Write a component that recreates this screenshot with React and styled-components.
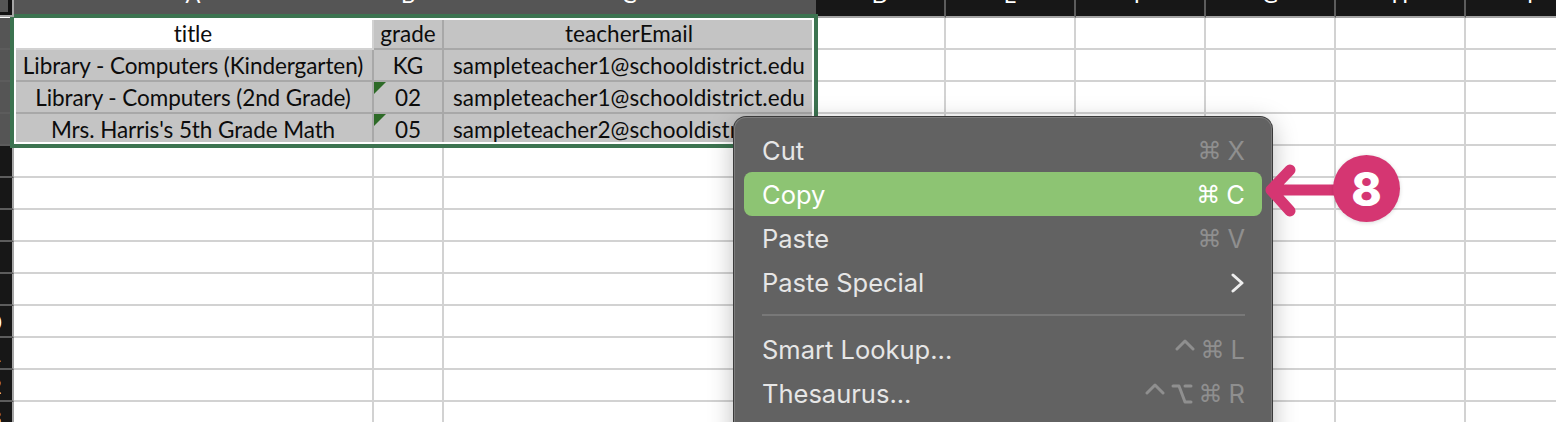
import React from 'react';
import styled, { createGlobalStyle } from 'styled-components';

const GlobalStyle = createGlobalStyle`
  html, body {
    margin: 0;
    width: 1556px;
    height: 422px;
    overflow: hidden;
    background: #fff;
  }
`

const Sheet = styled.div`
  position: relative;
  width: 1556px;
  height: 422px;
  overflow: hidden;
  font-family: Lato, "Open Sans", sans-serif;
  color: #0c0c0c;
`

const HeaderRow = styled.div`
  display: flex;
  height: 18px;
`
const Corner = styled.div`
  position: relative;
  z-index: 1;
  flex: none;
  box-sizing: border-box;
  width: 14px;
  height: 17px;
  border-right: 2px solid #a5a5a5;
  border-bottom: 2px solid #a5a5a5;
`
const CornerMark = styled.div`
  box-sizing: border-box;
  height: 15px;
  background: #555;
  border-right: 4px solid #111;
  border-bottom: 3px solid #111;
`
const ColHeader = styled.div`
  flex: none;
  box-sizing: border-box;
  width: ${p => p.$w}px;
  display: flex;
  justify-content: center;
  align-items: flex-end;
  overflow: hidden;
  background: ${p => (p.$selected ? '#555' : '#171717')};
  color: #fff;
  font-size: 22px;
  line-height: 22px;
  border-bottom: 2px solid #a5a5a5;
  border-right: 2px solid ${p => (p.$selected ? '#555' : '#5c5c5c')};
  span {
    margin-bottom: 10px;
  }
`

const Row = styled.div`
  display: flex;
  height: 32px;
`
const RowHeader = styled.div`
  flex: none;
  box-sizing: border-box;
  width: 14px;
  display: flex;
  justify-content: flex-end;
  align-items: center;
  overflow: hidden;
  white-space: nowrap;
  background: ${p => (p.$selected ? '#555' : '#171717')};
  color: #fff;
  font-size: 22px;
  border-bottom: 2px solid #5c5c5c;
  border-right: 2px solid #a5a5a5;
  span {
    flex: none;
    width: 26px;
    margin-right: 10px;
    text-align: center;
  }
`
const Cell = styled.div`
  position: relative;
  flex: none;
  box-sizing: border-box;
  width: ${p => p.$w}px;
  display: flex;
  justify-content: center;
  align-items: center;
  padding-top: 1px;
  white-space: nowrap;
  overflow: hidden;
  font-size: 22.5px;
  letter-spacing: ${p => p.$track || 0}px;
  background: ${p => (p.$selected ? '#c4c4c4' : '#fff')};
  border-bottom: 2px solid ${p => (p.$selected ? '#a8a8a8' : '#d2d2d2')};
  border-right: 2px solid ${p => (p.$selected ? '#a8a8a8' : '#d2d2d2')};
  ${p => p.$flag && `
    &::before {
      content: '';
      position: absolute;
      left: 0;
      top: 0;
      border-top: 12px solid #2d6a27;
      border-right: 12px solid transparent;
    }
  `}
`

const Selection = styled.div`
  position: absolute;
  left: 10px;
  top: 14px;
  width: 808px;
  height: 134px;
  box-sizing: border-box;
  border: 4px solid #3c7350;
  box-shadow: inset 0 0 0 2px #fff;
`

const Menu = styled.div`
  position: absolute;
  left: 734px;
  top: 117px;
  width: 538px;
  height: 340px;
  box-sizing: border-box;
  padding-top: 11px;
  background: #626262;
  border-radius: 12px;
  font-family: Inter, Roboto, sans-serif;
  font-size: 25.5px;
  box-shadow: inset 0 0 0 1px #7c7c7c, 0 0 0 1px #3a3a3a, 0 6px 26px rgba(0, 0, 0, 0.28);
`
const Item = styled.div`
  box-sizing: border-box;
  display: flex;
  align-items: center;
  justify-content: space-between;
  height: 44px;
  margin: 0 10px;
  padding: 1px 17px 0 18px;
  border-radius: 8px;
  color: ${p => (p.$active ? '#fff' : '#e6e6e6')};
  background: ${p => (p.$active ? '#8dc473' : 'transparent')};
`
const Shortcut = styled.span`
  display: flex;
  align-items: center;
  gap: 6px;
  color: ${p => (p.$active ? '#fff' : '#8f8f8f')};
`
const KeyGlyph = styled.span`
  font-family: "DejaVu Sans", sans-serif;
  font-size: 24px;
`
const KeyIcon = styled.svg`
  flex: none;
  margin-bottom: ${p => p.$lift || 0}px;
  fill: none;
  stroke: currentColor;
  stroke-width: 3;
  stroke-linecap: round;
  stroke-linejoin: round;
`
const Separator = styled.div`
  height: 2px;
  margin: 10px 27px 11px 28px;
  background: #787878;
`

const Badge = styled.div`
  position: absolute;
  left: 1333px;
  top: 155px;
  width: 67px;
  height: 67px;
  border-radius: 50%;
  display: flex;
  align-items: center;
  justify-content: center;
  background: #d53672;
  color: #fff;
  font-family: Inter, sans-serif;
  font-weight: 800;
  font-size: 46px;
  box-shadow: 0 1px 4px rgba(0, 0, 0, 0.15);
`
const ArrowIcon = styled.svg`
  position: absolute;
  left: 1260px;
  top: 160px;
`

const columns = [
  { w: 360, label: 'A', selected: true, track: -0.08 },
  { w: 70, label: 'B', selected: true },
  { w: 372, label: 'C', selected: true, track: 0.06 },
  { w: 130, label: 'D' },
  { w: 130, label: 'E' },
  { w: 130, label: 'F' },
  { w: 130, label: 'G' },
  { w: 130, label: 'H' },
  { w: 130, label: 'I' },
]

const data = [
  ['title', 'grade', 'teacherEmail'],
  ['Library - Computers (Kindergarten)', 'KG', 'sampleteacher1@schooldistrict.edu'],
  ['Library - Computers (2nd Grade)', '02', 'sampleteacher1@schooldistrict.edu'],
  ["Mrs. Harris's 5th Grade Math", '05', 'sampleteacher2@schooldistrict.edu'],
]

const rows = []
for (let i = 0; i < 13; i++) rows.push(i)

const ControlKey = () => (
  <KeyIcon $lift={10} width="20" height="14" viewBox="0 0 20 14"><path d="M2 11L10 3l8 8" /></KeyIcon>
)
const OptionKey = () => (
  <KeyIcon width="22" height="20" viewBox="0 0 22 20"><path d="M2 2h6l6 16h6M14 2h6" /></KeyIcon>
)

const Keys = ({ children, letter, active }) => (
  <Shortcut $active={active}>
    {children}
    <KeyGlyph>⌘</KeyGlyph>
    <span>{letter}</span>
  </Shortcut>
)

export default function App() {
  return (
    <Sheet>
      <GlobalStyle />
      <HeaderRow>
        <Corner><CornerMark /></Corner>
        {columns.map(col => (
          <ColHeader key={col.label} $w={col.w} $selected={col.selected}>
            <span>{col.label}</span>
          </ColHeader>
        ))}
      </HeaderRow>
      {rows.map(i => (
        <Row key={i}>
          <RowHeader $selected={i < 4}><span>{i + 1}</span></RowHeader>
          {columns.map((col, c) => (
            <Cell
              key={col.label}
              $w={col.w}
              $track={col.track}
              $selected={i < 4 && c < 3 && !(i === 0 && c === 0)}
              $flag={c === 1 && (i === 2 || i === 3)}
            >
              {i < 4 && c < 3 ? data[i][c] : ''}
            </Cell>
          ))}
        </Row>
      ))}
      <Selection />
      <Menu>
        <Item><span>Cut</span><Keys letter="X" /></Item>
        <Item $active><span>Copy</span><Keys letter="C" active /></Item>
        <Item><span>Paste</span><Keys letter="V" /></Item>
        <Item>
          <span>Paste Special</span>
          <svg width="14" height="20" viewBox="0 0 14 20" fill="none" stroke="#eee" strokeWidth="3" strokeLinecap="round" strokeLinejoin="round">
            <path d="M2 2l9 8-9 8" />
          </svg>
        </Item>
        <Separator />
        <Item><span>Smart Lookup...</span><Keys letter="L"><ControlKey /></Keys></Item>
        <Item><span>Thesaurus...</span><Keys letter="R"><ControlKey /><OptionKey /></Keys></Item>
      </Menu>
      <ArrowIcon width="90" height="64" viewBox="0 0 90 64" fill="none" stroke="#d53672" strokeWidth="11" strokeLinecap="round" strokeLinejoin="round">
        <path d="M11 30H84M30 10L11 30L30 51" />
      </ArrowIcon>
      <Badge>8</Badge>
    </Sheet>
  );
}
